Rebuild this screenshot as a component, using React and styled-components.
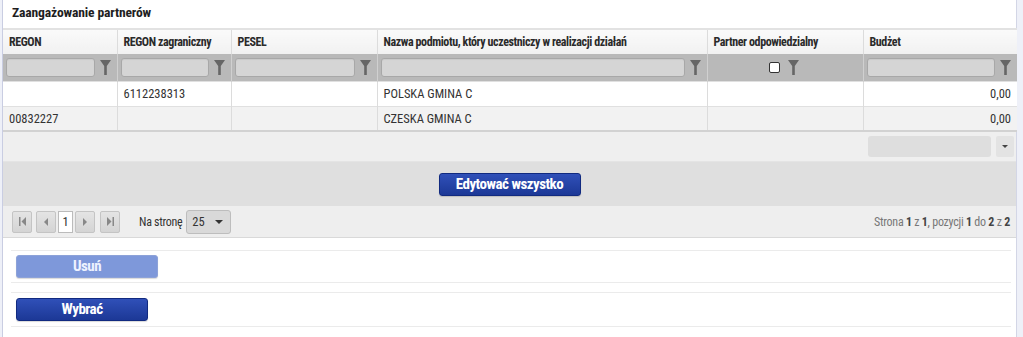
import React from "react";
import styled, { createGlobalStyle } from "styled-components";

const Global = createGlobalStyle`
  html, body { margin: 0; padding: 0; background: #eef0f8; }
  body { font-family: "Roboto", sans-serif; font-stretch: 75%; color: #333; }
  * { box-sizing: border-box; }
`;

const Page = styled.div`
  width: 1023px;
  height: 337px;
  display: flex;
  background: #eef0f8;
  padding-left: 2px;
`;

const Panel = styled.div`
  width: 1015px;
  background: #fff;
  border-left: 1px solid #c9cde2;
  border-right: 1px solid #d3d6e6;
  display: flex;
  flex-direction: column;
`;

const Title = styled.div`
  height: 28px;
  padding: 4px 0 0 9px;
  font-size: 13.6px;
  letter-spacing: -0.15px;
  font-weight: bold;
  color: #1e1e1e;
  white-space: nowrap;
`;

const Table = styled.table`
  border-collapse: collapse;
  table-layout: fixed;
  width: 1014px;
`;

const Th = styled.th`
  height: 25px;
  text-align: left;
  font-size: 12px;
  letter-spacing: -0.4px;
  font-weight: bold;
  color: #2a2a2a;
  padding: 0 0 0 6px;
  white-space: nowrap;
  overflow: hidden;
  background: linear-gradient(#fafafa, #f1f1f1);
  border-top: 2px solid #e2e2e2;
  border-left: 1px solid #dcdcdc;
  &:first-child { border-left: none; }
`;

const FilterCell = styled.td`
  height: 27px;
  background: #b9b9b9;
  padding: 0 6px 0 3px;
  border-left: 1px solid #d0d0d0;
  &:first-child { border-left: none; }
`;

const FilterWrap = styled.div`
  display: flex;
  align-items: center;
  justify-content: ${(p) => (p.$center ? "center" : "flex-start")};
  gap: ${(p) => (p.$center ? "8px" : "5px")};
`;

const FilterInput = styled.div`
  flex: 1;
  height: 19px;
  background: #d5d5d5;
  border: 1px solid #a8a8a8;
  border-radius: 3px;
  box-shadow: inset 0 1px 1px rgba(0,0,0,0.06);
`;

const CheckBox = styled.div`
  width: 11px;
  height: 11px;
  background: #fff;
  border: 1px solid #333;
  border-radius: 2px;
`;

const Td = styled.td`
  height: 25px;
  font-size: 12.5px;
  color: #333;
  padding: 0 6px;
  white-space: nowrap;
  text-align: ${(p) => (p.$right ? "right" : "left")};
  background: ${(p) => (p.$alt ? "#f2f2f2" : "#fff")};
  border-left: 1px solid #dcdcdc;
  border-top: 1px solid #e0e0e0;
  border-bottom: ${(p) => (p.$last ? "2px solid #d2d2d2" : "none")};
  &:first-child { border-left: none; }
`;

const FooterRow = styled.div`
  height: 30px;
  background: #efefef;
  display: flex;
  justify-content: flex-end;
  align-items: center;
  padding-right: 2px;
  gap: 5px;
  border-bottom: 1px solid #e4e4e4;
`;

const SumBox = styled.div`
  width: 123px;
  height: 21px;
  background: #dedede;
  border-radius: 3px;
`;

const SumArrow = styled.div`
  width: 18px;
  height: 21px;
  background: #e3e3e3;
  border-radius: 2px;
  display: flex;
  align-items: center;
  justify-content: center;
`;

const EditBand = styled.div`
  height: 44px;
  background: #dfdfdf;
  display: flex;
  justify-content: center;
  align-items: center;
`;

const BlueButton = styled.button`
  width: ${(p) => p.$w}px;
  height: 23px;
  border-radius: 3px;
  border: 1px solid ${(p) => (p.$disabled ? "#8da2d8" : "#112a80")};
  background: ${(p) =>
    p.$disabled ? "#7e98da" : "linear-gradient(#3050b8, #1c3896)"};
  color: ${(p) => (p.$disabled ? "#eef2ff" : "#fff")};
  font-family: inherit;
  font-stretch: inherit;
  font-weight: bold;
  font-size: 15px;
  letter-spacing: -0.5px;
  line-height: 1;
  padding: 0;
  box-shadow: 0 1px 1px rgba(0,0,0,0.15);
`;

const PagerBar = styled.div`
  height: 32px;
  background: #eeeeee;
  border-bottom: 1px solid #d9d9d9;
  display: flex;
  align-items: center;
  padding: 0 6px 0 9px;
`;

const PagerGroup = styled.div`
  display: flex;
  align-items: center;
`;

const PgBtn = styled.div`
  width: 20px;
  height: 22px;
  border: 1px solid #c4c4c4;
  border-radius: 2px;
  background: linear-gradient(#e4e4e4, #d4d4d4);
  display: flex;
  align-items: center;
  justify-content: center;
  margin-left: ${(p) => p.$ml || 0}px;
`;

const PgInput = styled.div`
  width: 15px;
  height: 22px;
  background: #fff;
  border: 1px solid #bbb;
  font-size: 12.5px;
  display: flex;
  align-items: center;
  justify-content: center;
  margin: 0 2px;
`;

const PerPage = styled.span`
  font-size: 12px;
  letter-spacing: -0.3px;
  color: #333;
  margin-left: 19px;
  margin-right: 4px;
`;

const PerSelect = styled.div`
  width: 45px;
  height: 24px;
  border: 1px solid #bdbdbd;
  border-radius: 3px;
  background: #d9d9d9;
  display: flex;
  align-items: center;
  justify-content: space-between;
  padding: 0 7px 0 5px;
  font-size: 12.5px;
`;

const PagerInfo = styled.div`
  margin-left: auto;
  font-size: 12px;
  letter-spacing: -0.25px;
  color: #777;
  b { color: #444; font-weight: bold; }
`;

const FormArea = styled.div`
  padding: 12px 5px 0 8px;
  display: flex;
  flex-direction: column;
  gap: 9px;
`;

const FormRow = styled.div`
  height: ${(p) => p.$h}px;
  border-top: 1px solid #ebebeb;
  border-bottom: 1px solid #ebebeb;
  display: flex;
  align-items: center;
  padding-left: 5px;
`;

const Funnel = () => (
  <svg width="11" height="15" viewBox="0 0 11 15">
    <path d="M0 0 H11 L6.8 6 V15 H4.2 V6 Z" fill="#666" />
  </svg>
);

const Tri = ({ dir = "down", size = 4, color = "#444" }) => {
  const s = size;
  const pts =
    dir === "down"
      ? `0,0 ${2 * s},0 ${s},${s}`
      : dir === "left"
      ? `${s},0 ${s},${2 * s} 0,${s}`
      : `0,0 0,${2 * s} ${s},${s}`;
  const w = dir === "down" ? 2 * s : s;
  const h = dir === "down" ? s : 2 * s;
  return (
    <svg width={w} height={h} viewBox={`0 0 ${w} ${h}`}>
      <polygon points={pts} fill={color} />
    </svg>
  );
};

const EdgeIcon = ({ dir }) => (
  <svg width="7" height="9" viewBox="0 0 7 9">
    {dir === "first" ? (
      <>
        <rect x="0" y="0" width="1.5" height="9" fill="#888" />
        <polygon points="7,0 7,9 2.5,4.5" fill="#888" />
      </>
    ) : (
      <>
        <polygon points="0,0 0,9 4.5,4.5" fill="#888" />
        <rect x="5.5" y="0" width="1.5" height="9" fill="#888" />
      </>
    )}
  </svg>
);

const columns = [
  { label: "REGON", w: 114 },
  { label: "REGON zagraniczny", w: 114 },
  { label: "PESEL", w: 146 },
  { label: "Nazwa podmiotu, który uczestniczy w realizacji działań", w: 330 },
  { label: "Partner odpowiedzialny", w: 156, check: true },
  { label: "Budżet", w: 154 },
];

const rows = [
  ["", "6112238313", "", "POLSKA GMINA C", "", "0,00"],
  ["00832227", "", "", "CZESKA GMINA C", "", "0,00"],
];

export default function App() {
  return (
    <>
      <Global />
      <Page>
        <Panel>
          <Title>Zaangażowanie partnerów</Title>
          <Table>
            <colgroup>
              {columns.map((c) => (
                <col key={c.label} style={{ width: c.w }} />
              ))}
            </colgroup>
            <thead>
              <tr>
                {columns.map((c) => (
                  <Th key={c.label}>{c.label}</Th>
                ))}
              </tr>
              <tr>
                {columns.map((c) => (
                  <FilterCell key={c.label}>
                    {c.check ? (
                      <FilterWrap $center>
                        <CheckBox />
                        <Funnel />
                      </FilterWrap>
                    ) : (
                      <FilterWrap>
                        <FilterInput />
                        <Funnel />
                      </FilterWrap>
                    )}
                  </FilterCell>
                ))}
              </tr>
            </thead>
            <tbody>
              {rows.map((r, i) => (
                <tr key={i}>
                  {r.map((v, j) => (
                    <Td
                      key={j}
                      $alt={i % 2 === 1}
                      $last={i === rows.length - 1}
                      $right={j === 5}
                    >
                      {v}
                    </Td>
                  ))}
                </tr>
              ))}
            </tbody>
          </Table>
          <FooterRow>
            <SumBox />
            <SumArrow>
              <Tri dir="down" size={3} color="#444" />
            </SumArrow>
          </FooterRow>
          <EditBand>
            <BlueButton $w={142}>Edytować wszystko</BlueButton>
          </EditBand>
          <PagerBar>
            <PagerGroup>
              <PgBtn>
                <EdgeIcon dir="first" />
              </PgBtn>
              <PgBtn $ml={4}>
                <Tri dir="left" size={4} color="#888" />
              </PgBtn>
              <PgInput>1</PgInput>
              <PgBtn>
                <Tri dir="right" size={4} color="#888" />
              </PgBtn>
              <PgBtn $ml={5}>
                <EdgeIcon dir="last" />
              </PgBtn>
            </PagerGroup>
            <PerPage>Na stronę</PerPage>
            <PerSelect>
              <span>25</span>
              <Tri dir="down" size={4} color="#333" />
            </PerSelect>
            <PagerInfo>
              Strona <b>1</b> z <b>1</b>, pozycji <b>1</b> do <b>2</b> z <b>2</b>
            </PagerInfo>
          </PagerBar>
          <FormArea>
            <FormRow $h={33}>
              <BlueButton $w={142} $disabled>
                Usuń
              </BlueButton>
            </FormRow>
            <FormRow $h={35}>
              <BlueButton $w={132}>Wybrać</BlueButton>
            </FormRow>
          </FormArea>
        </Panel>
      </Page>
    </>
  );
}
